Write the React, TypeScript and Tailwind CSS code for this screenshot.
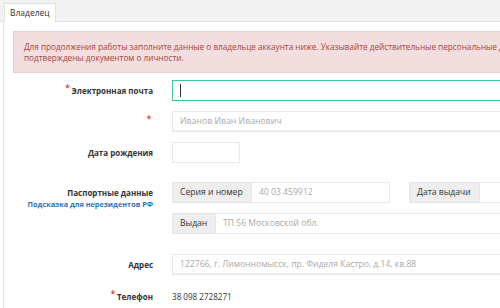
import React from "react";

const font = { fontFamily: '"Open Sans", "Liberation Sans", sans-serif' };

function Label({ children, req }: { children?: React.ReactNode; req?: boolean }) {
  return (
    <div className="w-[140px] shrink-0 text-right text-[8px] font-bold text-[#333] leading-[21px]">
      {req && <span className="text-[#e74c3c] text-[8px] relative top-[-3px] mr-[2px]">*</span>}
      {children}
    </div>
  );
}

export default function App() {
  return (
    <div className="w-[500px] h-[308px] overflow-hidden bg-white relative" style={font}>
      <div className="h-[22px] bg-[#f2f2f2] border-b border-[#e3e3e3] flex items-end pl-[4px] w-[600px]">
        <div className="h-[19px] bg-white border border-b-0 border-[#e3e3e3] px-[5px] text-[8.5px] text-[#333] leading-[17px] relative top-[1px]">
          Владелец
        </div>
      </div>
      <div className="ml-[3px] border-l border-[#e3e3e3] pl-[9px] pt-[9px] w-[700px] h-[300px]">
        <div className="w-[640px] h-[42px] bg-[#f2dede] border border-[#ebccd1] text-[#a94442] text-[8.2px] leading-[11px] pl-[10px] pt-[9px] whitespace-nowrap overflow-hidden">
          <div>Для продолжения работы заполните данные о владельце аккаунта ниже. Указывайте действительные персональные данные, они должны быть</div>
          <div>подтверждены документом о личности.</div>
        </div>

        {/* email */}
        <div className="flex mt-[7px] h-[21px]">
          <Label req>Электронная почта</Label>
          <div className="ml-[19px] w-[400px] h-[21px] border border-[#45c09c] flex items-center pl-[7px]">
            <span className="w-px h-[13px] bg-[#333]" />
          </div>
        </div>

        {/* name */}
        <div className="flex mt-[10px] h-[21px]">
          <Label req></Label>
          <div className="ml-[19px] w-[400px] h-[21px] border border-[#e8e8e8] shadow-[inset_0_-1px_0_#f2f2f2] flex items-center pl-[7px] text-[8.7px] text-[#aaa]">
            Иванов Иван Иванович
          </div>
        </div>

        {/* dob */}
        <div className="flex mt-[10px] h-[21px]">
          <Label>Дата рождения</Label>
          <div className="ml-[19px] w-[68px] h-[21px] border border-[#e8e8e8]" />
        </div>

        {/* passport */}
        <div className="flex mt-[19px]">
          <div className="w-[140px] shrink-0 text-right">
            <div className="text-[8px] font-bold text-[#333] leading-[21px]">Паспортные данные</div>
            <div className="text-[7.3px] font-bold text-[#2a74b5] leading-[9px] -mt-[3px]">Подсказка для нерезидентов РФ</div>
          </div>
          <div className="ml-[19px] flex flex-col">
            <div className="flex h-[21px]">
              <div className="w-[80px] h-[21px] bg-[#eeeeee] border border-[#e5e5e5] flex items-center pl-[7px] text-[8.6px] text-[#333]">
                Серия и номер
              </div>
              <div className="w-[138px] h-[21px] border border-l-0 border-[#e8e8e8] flex items-center pl-[7px] text-[8.6px] text-[#aaa]">
                40 03 459912
              </div>
              <div className="ml-[19px] w-[71px] h-[21px] bg-[#eeeeee] border border-[#e5e5e5] flex items-center pl-[7px] text-[8.6px] text-[#333]">
                Дата выдачи
              </div>
              <div className="w-[100px] h-[21px] border border-l-0 border-[#e8e8e8]" />
            </div>
            <div className="flex h-[21px] mt-[10px]">
              <div className="w-[44px] h-[21px] bg-[#eeeeee] border border-[#e5e5e5] flex items-center pl-[7px] text-[8.6px] text-[#333]">
                Выдан
              </div>
              <div className="w-[360px] h-[21px] border border-l-0 border-[#e8e8e8] flex items-center pl-[7px] text-[8.6px] text-[#aaa]">
                ТП 56 Московской обл.
              </div>
            </div>
          </div>
        </div>

        {/* address */}
        <div className="flex mt-[20px] h-[21px]">
          <Label>Адрес</Label>
          <div className="ml-[19px] w-[400px] h-[21px] border border-[#e8e8e8] shadow-[inset_0_-1px_0_#f2f2f2] flex items-center pl-[7px] text-[8.6px] text-[#aaa]">
            122766, г. Лимонномысск, пр. Фиделя Кастро, д.14, кв.88
          </div>
        </div>

        {/* phone */}
        <div className="flex mt-[11px] h-[21px]">
          <Label req>Телефон</Label>
          <div className="ml-[19px] text-[8.1px] text-[#333] leading-[21px]">38 098 2728271</div>
        </div>
      </div>
    </div>
  );
}
